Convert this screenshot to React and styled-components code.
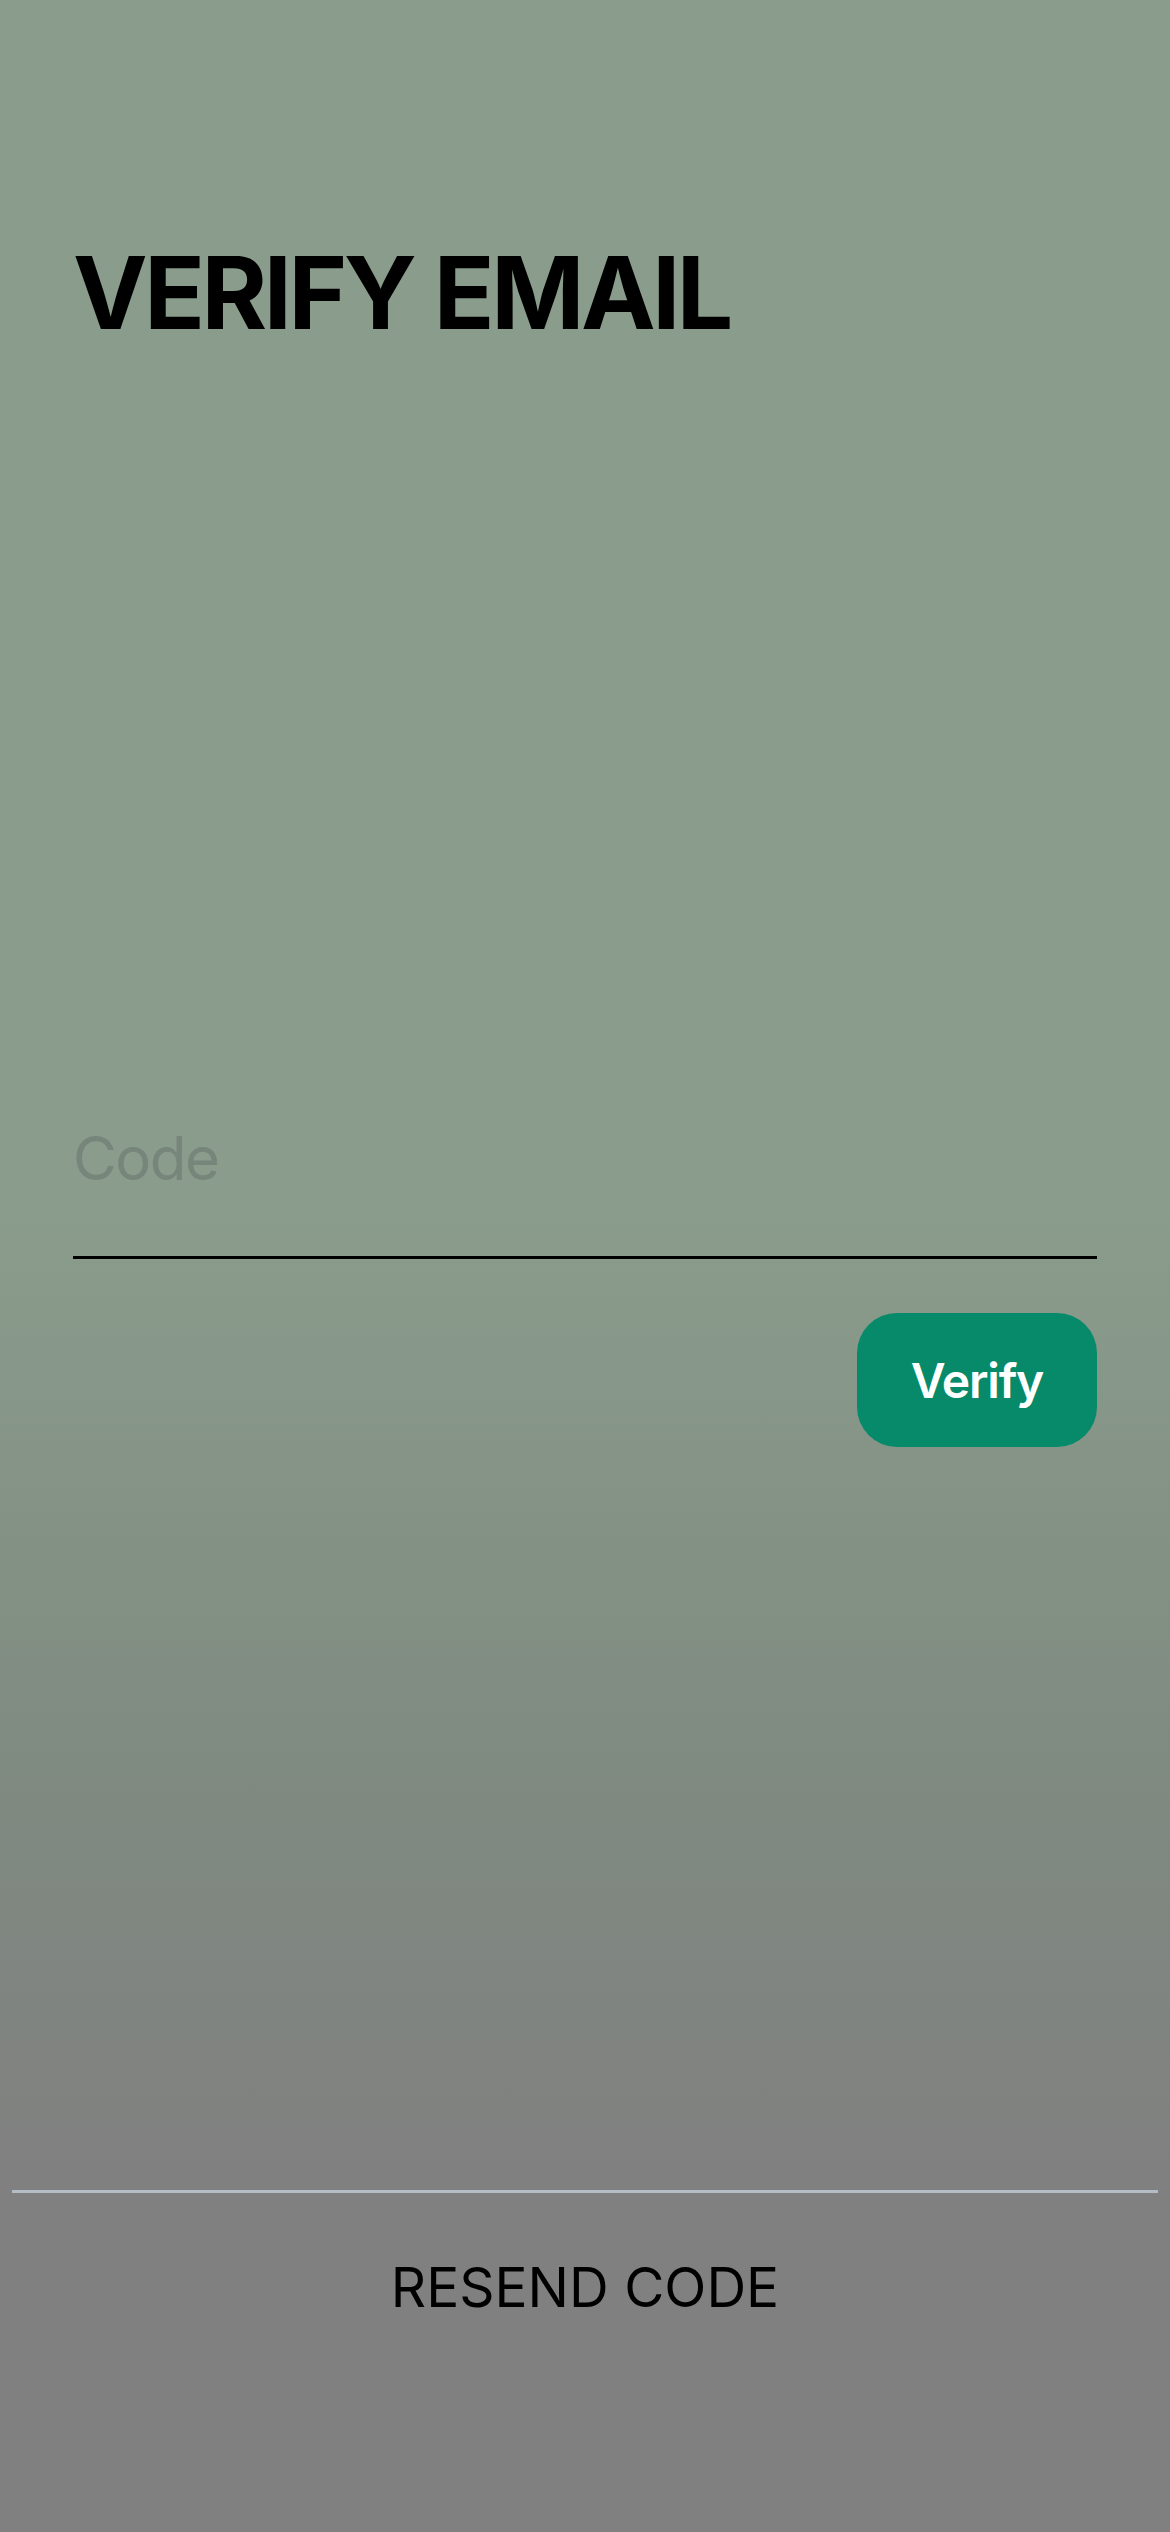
import React from "react"
import styled, { createGlobalStyle } from "styled-components"

const GlobalStyle = createGlobalStyle`
  html, body {
    margin: 0;
    padding: 0;
  }
  body {
    font-family: Inter, "Noto Sans", sans-serif;
    -webkit-font-smoothing: antialiased;
  }
`

const Screen = styled.div`
  display: flex;
  flex-direction: column;
  height: 2532px;
  background: linear-gradient(
    to bottom,
    #8a9c8c 0%,
    #8a9c8c 48%,
    #7f8a80 70%,
    #808080 86%,
    #808080 100%
  );
`

const Content = styled.main`
  display: flex;
  flex-direction: column;
  padding: 0 73px;
`

const Title = styled.h1`
  margin: 243px 0 0;
  font-size: 100px;
  line-height: 1;
  font-weight: 700;
  color: #000;
  letter-spacing: -3.4px;
`

const CodeInput = styled.input`
  margin-top: 779px;
  box-sizing: content-box;
  height: 72px;
  padding: 0 0 62px;
  border: none;
  border-bottom: 3px solid #000;
  background: transparent;
  font-family: inherit;
  font-size: 60px;
  line-height: 72px;
  letter-spacing: -1.5px;
  color: #000;
  outline: none;

  &::placeholder {
    color: #76867a;
  }
`

const Actions = styled.div`
  display: flex;
  justify-content: flex-end;
  margin-top: 54px;
`

const VerifyButton = styled.button`
  width: 240px;
  height: 134px;
  border: none;
  border-radius: 40px;
  background: #068a6a;
  color: #fff;
  font-family: inherit;
  font-size: 48px;
  font-weight: 600;
  letter-spacing: -1.2px;
  cursor: pointer;
`

const Footer = styled.footer`
  margin-top: auto;
  height: 342px;
  display: flex;
  flex-direction: column;
  align-items: center;
  padding: 0 12px;
`

const Divider = styled.hr`
  align-self: stretch;
  margin: 0;
  border: none;
  height: 3px;
  background: #b4bcc6;
`

const ResendButton = styled.button`
  margin-top: 61px;
  padding: 0;
  border: none;
  background: none;
  font-family: inherit;
  font-size: 55px;
  line-height: 66px;
  font-weight: 400;
  color: #000;
  cursor: pointer;
`

export default function App() {
  return (
    <>
      <GlobalStyle />
      <Screen>
        <Content>
          <Title>VERIFY EMAIL</Title>
          <CodeInput type="text" placeholder="Code" />
          <Actions>
            <VerifyButton>Verify</VerifyButton>
          </Actions>
        </Content>
        <Footer>
          <Divider />
          <ResendButton>RESEND CODE</ResendButton>
        </Footer>
      </Screen>
    </>
  )
}
